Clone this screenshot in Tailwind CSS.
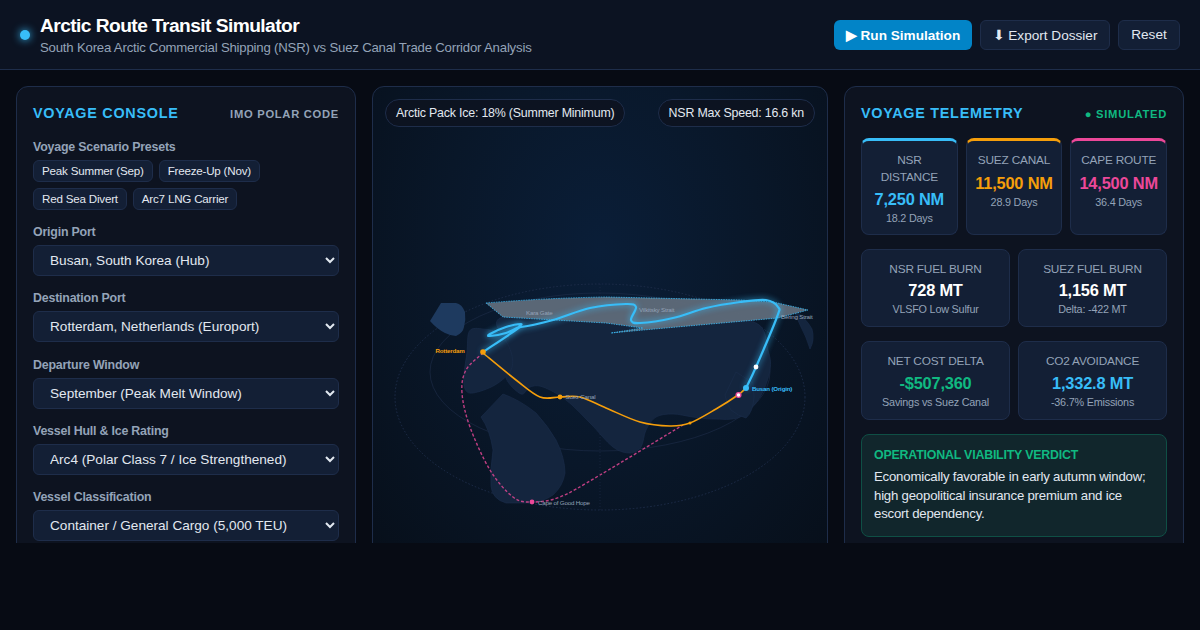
<!DOCTYPE html>
<html lang="en">
<head>
    <meta charset="UTF-8">
    <title>Arctic Route Transit Simulator</title>
    <script src="https://cdn.jsdelivr.net/npm/@tailwindcss/browser@4"></script>
</head>
<body class="bg-[#070b14] h-[630px] overflow-hidden font-['Liberation_Sans',Arial,sans-serif] tracking-[-0.2px] text-[#e2e8f0]">

    <header class="h-[70px] bg-[#0c1322] border-b border-[#1e2d4a] flex items-center justify-between pl-5 pr-5">
        <div class="flex items-center gap-[10px]">
            <div class="w-[10px] h-[10px] rounded-full bg-[#38bdf8] shadow-[0_0_8px_#38bdf8]"></div>
            <div>
                <h1 class="text-[19.2px] leading-[23px] font-bold text-white tracking-[-0.57px]">Arctic Route Transit Simulator</h1>
                <p class="text-[13.2px] leading-[15px] mt-[3px] text-[#94a3b8]">South Korea Arctic Commercial Shipping (NSR) vs Suez Canal Trade Corridor Analysis</p>
            </div>
        </div>
        <div class="flex gap-2 items-stretch tracking-normal">
            <button class="h-[30px] w-[138px] pt-[3px] rounded-md bg-[#0284c7] text-white text-[13.6px] font-bold">▶ Run Simulation</button>
            <button class="h-[30px] w-[130px] pt-[3px] rounded-md bg-[#131f35] border border-[#1e2d4a] text-[13.6px]">⬇ Export Dossier</button>
            <button class="h-[30px] w-[62px] pt-[2px] rounded-md bg-[#131f35] border border-[#1e2d4a] text-[13.6px]">Reset</button>
        </div>
    </header>

    <div class="h-[473px] overflow-hidden">
        <main class="grid grid-cols-[340px_1fr_340px] gap-4 px-4 pt-4">

            <!-- left: console -->
            <section class="bg-[#0d1320] border border-[#1e2d4a] rounded-xl p-4">
                <div class="flex items-center justify-between mb-[17px]">
                    <h2 class="text-[14.4px] leading-[20px] font-bold tracking-[0.72px] text-[#38bdf8]">VOYAGE CONSOLE</h2>
                    <span class="mt-[2px] text-[11.2px] leading-[14px] font-bold tracking-[0.72px] text-[#94a3b8]">IMO POLAR CODE</span>
                </div>

                <label class="block text-[12.4px] leading-[14px] font-bold text-[#94a3b8] mb-[6px]">Voyage Scenario Presets</label>
                <div class="flex flex-wrap gap-[6px] mb-[15px]">
                    <button class="text-[11.6px] leading-[14px] py-[3px] px-2 rounded-md bg-[#131f35] border border-[#1e2d4a]">Peak Summer (Sep)</button>
                    <button class="text-[11.6px] leading-[14px] py-[3px] px-2 rounded-md bg-[#131f35] border border-[#1e2d4a]">Freeze-Up (Nov)</button>
                    <button class="text-[11.6px] leading-[14px] py-[3px] px-2 rounded-md bg-[#131f35] border border-[#1e2d4a]">Red Sea Divert</button>
                    <button class="text-[11.6px] leading-[14px] py-[3px] px-2 rounded-md bg-[#131f35] border border-[#1e2d4a]">Arc7 LNG Carrier</button>
                </div>

                <div class="flex flex-col gap-[15.3px]">
                    <div>
                        <label class="block text-[12.4px] leading-[14px] font-bold text-[#94a3b8] mb-[6px]">Origin Port</label>
                        <select class="w-full h-[31px] px-3 rounded-md bg-[#131f35] border border-[#1e2d4a] tracking-normal text-[13.6px] text-[#e2e8f0]"><option>Busan, South Korea (Hub)</option></select>
                    </div>
                    <div>
                        <label class="block text-[12.4px] leading-[14px] font-bold text-[#94a3b8] mb-[6px]">Destination Port</label>
                        <select class="w-full h-[31px] px-3 rounded-md bg-[#131f35] border border-[#1e2d4a] tracking-normal text-[13.6px] text-[#e2e8f0]"><option>Rotterdam, Netherlands (Europort)</option></select>
                    </div>
                    <div>
                        <label class="block text-[12.4px] leading-[14px] font-bold text-[#94a3b8] mb-[6px]">Departure Window</label>
                        <select class="w-full h-[31px] px-3 rounded-md bg-[#131f35] border border-[#1e2d4a] tracking-normal text-[13.6px] text-[#e2e8f0]"><option>September (Peak Melt Window)</option></select>
                    </div>
                    <div>
                        <label class="block text-[12.4px] leading-[14px] font-bold text-[#94a3b8] mb-[6px]">Vessel Hull &amp; Ice Rating</label>
                        <select class="w-full h-[31px] px-3 rounded-md bg-[#131f35] border border-[#1e2d4a] tracking-normal text-[13.6px] text-[#e2e8f0]"><option>Arc4 (Polar Class 7 / Ice Strengthened)</option></select>
                    </div>
                    <div>
                        <label class="block text-[12.4px] leading-[14px] font-bold text-[#94a3b8] mb-[6px]">Vessel Classification</label>
                        <select class="w-full h-[31px] px-3 rounded-md bg-[#131f35] border border-[#1e2d4a] tracking-normal text-[13.6px] text-[#e2e8f0]"><option>Container / General Cargo (5,000 TEU)</option></select>
                    </div>
                </div>
            </section>

            <!-- center: map -->
            <section class="relative overflow-hidden border border-[#1e2d4a] rounded-xl bg-[radial-gradient(ellipse_at_50%_35%,#0a1e38_0%,#091729_50%,#070f1a_100%)]">
                <svg class="absolute left-0 top-0 w-[454px] h-[456px]" viewBox="373 87 454 456" fill="none">
                    <ellipse cx="600" cy="397" rx="205" ry="113" stroke="#1e2d4a" stroke-dasharray="1.5 2"/>
                    <ellipse cx="600" cy="372" rx="170" ry="79" stroke="#1e2d4a" stroke-width="0.6"/>
                    <path d="M600 284V510" stroke="#1e2d4a" stroke-width="0.6" stroke-dasharray="1 2"/>

                    <g fill="#14253e" stroke="#1b2e4c" stroke-width="0.6">
                        <path data-smooth="503,317 600,320 700,320 756,323 768,350 770,370 760,397 740,417 713,419 693,417 673,414 656,417 646,430 641,447 630,453 613,447 590,423 566,400 543,387 530,387 521,394 506,378 511,360 506,343"/>
                        <path data-smooth="469.5,331 483,329 500,334 511,352 511,370 495,385 473,393 465,389 464,375 467,352"/>
                        <path d="M503 394 Q520 400 536 413 Q548 426 556 440 Q565 458 565 473 Q563 486 553 495 Q543 502 530 503 L506 503 Q492 499 491 486 Q490 470 493 450 Q490 430 481 417Z"/>
                        <path d="M736 372 L725 395 Q726 403 731 410 Q738 416 746 418 Q753 412 754 397 L753 383 Z"/>
                        <path d="M793 309 Q806 318 812 329 Q815 340 810 349 Q806 336 801 327Z"/>
                    </g>
                    <path fill="#1e3a5f" d="M441 303 L430 321 Q437 329 445 333 Q451 336 456 336 Q463 333 464 327 Q466 320 465 312 Q462 304 456 303Z"/>

                    <path fill="#5f6b7a" fill-opacity="0.95" d="M486 303 Q545 298 606 297 L740 300 L773 302 L808 310 L778 318 L643 330 L611 333 L643 328 L606 323 L503 317Z"/>
                    <path stroke="#38bdf8" stroke-width="0.8" stroke-dasharray="1.5 1" d="M486 303 Q545 298 606 297 L740 300 L773 302 L808 310 L778 318 L643 330 L611 333 L643 328 L606 323 L503 317Z"/>

                    <path data-smooth-open="483,353 466,370 462,393 470,427 490,470 513,497 532,502 560,497 600,475 683,425" stroke="#ec4899" stroke-opacity="0.8" stroke-width="1.4" stroke-dasharray="3 2"/>
                    <path data-smooth-open="483,353 516,380 540,397 560,397 580,397 606,408 640,422 670,426 690,423 716,409 738,395 746,388" stroke="#f59e0b" stroke-width="1.6"/>
                    <path class="drop-shadow-[0_0_3px_#38bdf8]" data-smooth-open="746,388 756,367 777,317 778,307 766,300 740,302 706,308 673,318 640,323 631,320 636,307 626,304 590,308 553,320 521,327 521,324 506,327 490,334 490,336 506,333 520,327 483,352" stroke="#38bdf8" stroke-width="2.2" stroke-linecap="round" stroke-linejoin="round"/>

                    <circle cx="483" cy="352" r="2.8" fill="#f59e0b"/>
                    <circle cx="560" cy="397" r="2.4" fill="#f59e0b"/>
                    <circle cx="690" cy="423" r="1.5" fill="#f59e0b"/>
                    <circle cx="532" cy="502" r="2.4" fill="#ec4899"/>
                    <circle cx="746" cy="388" r="3" fill="#38bdf8"/>
                    <circle cx="738.5" cy="395" r="2.4" fill="#ffffff" stroke="#ec4899" stroke-width="1.3"/>
                    <circle cx="756" cy="367" r="2.4" fill="#ffffff"/>

                    <g font-size="6.2" font-family="Liberation Sans, Arial, sans-serif" letter-spacing="-0.2">
                        <text x="435.5" y="353" fill="#f59e0b" font-weight="700">Rotterdam</text>
                        <text x="752" y="391" fill="#38bdf8" font-weight="700">Busan (Origin)</text>
                        <text x="565.5" y="399" fill="#94a3b8">Suez Canal</text>
                        <text x="538" y="505" fill="#94a3b8">Cape of Good Hope</text>
                        <text x="781" y="319" fill="#94a3b8">Bering Strait</text>
                        <text x="639" y="312" fill="#94a3b8">Vilkitsky Strait</text>
                        <text x="526" y="315" fill="#94a3b8">Kara Gate</text>
                    </g>
                </svg>
                <div class="relative flex items-start justify-between p-3 h-[470px]">
                    <span class="text-[12.4px] leading-[14px] py-[6px] px-[10px] rounded-full bg-[#0d1320]/90 border border-[#1e2d4a]">Arctic Pack Ice: 18% (Summer Minimum)</span>
                    <span class="text-[12.4px] leading-[14px] py-[6px] px-[10px] rounded-full bg-[#0d1320]/90 border border-[#1e2d4a]">NSR Max Speed: 16.6 kn</span>
                </div>
            </section>

            <!-- right: telemetry -->
            <section class="bg-[#0d1320] border border-[#1e2d4a] rounded-xl p-4">
                <div class="flex items-center justify-between mb-[15px]">
                    <h2 class="text-[14.4px] leading-[20px] font-bold tracking-[0.72px] text-[#38bdf8]">VOYAGE TELEMETRY</h2>
                    <span class="mt-[2px] text-[11.2px] leading-[14px] font-bold tracking-[0.72px] text-[#10b981]">● SIMULATED</span>
                </div>

                <div class="grid grid-cols-3 gap-2 mb-[14px]">
                    <div class="bg-[#131f35] border border-[#1e2d4a] border-t-[3px] border-t-[#38bdf8] rounded-lg pt-[11px] pb-[10px] px-2 text-center">
                        <div class="text-[11.84px] leading-[16.5px] text-[#94a3b8]">NSR DISTANCE</div>
                        <div class="text-[16.4px] leading-[18px] font-bold text-[#38bdf8] mt-[5px]">7,250 NM</div>
                        <div class="text-[10.8px] leading-[12px] text-[#94a3b8] mt-[4px]">18.2 Days</div>
                    </div>
                    <div class="bg-[#131f35] border border-[#1e2d4a] border-t-[3px] border-t-[#f59e0b] rounded-lg pt-[11px] pb-[10px] px-2 text-center">
                        <div class="text-[11.84px] leading-[16.5px] text-[#94a3b8]">SUEZ CANAL</div>
                        <div class="text-[16.4px] leading-[18px] font-bold text-[#f59e0b] mt-[5px]">11,500 NM</div>
                        <div class="text-[10.8px] leading-[12px] text-[#94a3b8] mt-[4px]">28.9 Days</div>
                    </div>
                    <div class="bg-[#131f35] border border-[#1e2d4a] border-t-[3px] border-t-[#ec4899] rounded-lg pt-[11px] pb-[10px] px-2 text-center">
                        <div class="text-[11.84px] leading-[16.5px] text-[#94a3b8]">CAPE ROUTE</div>
                        <div class="text-[16.4px] leading-[18px] font-bold text-[#ec4899] mt-[5px]">14,500 NM</div>
                        <div class="text-[10.8px] leading-[12px] text-[#94a3b8] mt-[4px]">36.4 Days</div>
                    </div>
                </div>

                <div class="grid grid-cols-2 gap-2 mb-[14px]">
                    <div class="bg-[#131f35] border border-[#1e2d4a] rounded-lg pt-[11px] pb-[11px] px-2 text-center">
                        <div class="text-[11.84px] leading-[16px] text-[#94a3b8]">NSR FUEL BURN</div>
                        <div class="text-[16.4px] leading-[18px] font-bold text-white mt-[4px]">728 MT</div>
                        <div class="text-[10.8px] leading-[12px] text-[#94a3b8] mt-[4px]">VLSFO Low Sulfur</div>
                    </div>
                    <div class="bg-[#131f35] border border-[#1e2d4a] rounded-lg pt-[11px] pb-[11px] px-2 text-center">
                        <div class="text-[11.84px] leading-[16px] text-[#94a3b8]">SUEZ FUEL BURN</div>
                        <div class="text-[16.4px] leading-[18px] font-bold text-white mt-[4px]">1,156 MT</div>
                        <div class="text-[10.8px] leading-[12px] text-[#94a3b8] mt-[4px]">Delta: -422 MT</div>
                    </div>
                </div>

                <div class="grid grid-cols-2 gap-2 mb-[14px]">
                    <div class="bg-[#131f35] border border-[#1e2d4a] rounded-lg pt-[11px] pb-[11px] px-2 text-center">
                        <div class="text-[11.84px] leading-[16px] text-[#94a3b8]">NET COST DELTA</div>
                        <div class="text-[16.4px] leading-[18px] font-bold text-[#10b981] mt-[5px]">-$507,360</div>
                        <div class="text-[10.8px] leading-[12px] text-[#94a3b8] mt-[4px]">Savings vs Suez Canal</div>
                    </div>
                    <div class="bg-[#131f35] border border-[#1e2d4a] rounded-lg pt-[11px] pb-[11px] px-2 text-center">
                        <div class="text-[11.84px] leading-[16px] text-[#94a3b8]">CO2 AVOIDANCE</div>
                        <div class="text-[16.4px] leading-[18px] font-bold text-[#38bdf8] mt-[5px]">1,332.8 MT</div>
                        <div class="text-[10.8px] leading-[12px] text-[#94a3b8] mt-[4px]">-36.7% Emissions</div>
                    </div>
                </div>

                <div class="bg-[#11262c] border border-[#0f4f45] rounded-lg pt-[13px] pb-3 px-3">
                    <div class="text-[12.4px] leading-[14px] font-bold tracking-[-0.2px] text-[#10b981] mb-[6px]">OPERATIONAL VIABILITY VERDICT</div>
                    <p class="text-[13.2px] leading-[18.6px] text-[#e2e8f0]">Economically favorable in early autumn window; high geopolitical insurance premium and ice escort dependency.</p>
                </div>
            </section>
        </main>
    </div>

    <script>
        // catmull-rom through the hand-read route points
        const smooth = (pts, closed) => {
            const p = pts.trim().split(/\s+/).map(s => s.split(',').map(Number));
            const at = i => closed ? p[(i + p.length) % p.length] : p[Math.max(0, Math.min(p.length - 1, i))];
            let d = `M${p[0][0]} ${p[0][1]}`;
            const n = closed ? p.length : p.length - 1;
            for (let i = 0; i < n; i++) {
                const [a, b, c, e] = [at(i - 1), at(i), at(i + 1), at(i + 2)];
                d += ` C${b[0] + (c[0] - a[0]) / 6} ${b[1] + (c[1] - a[1]) / 6} ${c[0] - (e[0] - b[0]) / 6} ${c[1] - (e[1] - b[1]) / 6} ${c[0]} ${c[1]}`;
            }
            return d + (closed ? 'Z' : '');
        };
        document.querySelectorAll('[data-smooth]').forEach(el => el.setAttribute('d', smooth(el.dataset.smooth, true)));
        document.querySelectorAll('[data-smooth-open]').forEach(el => el.setAttribute('d', smooth(el.dataset.smoothOpen, false)));
    </script>

</body>
</html>
